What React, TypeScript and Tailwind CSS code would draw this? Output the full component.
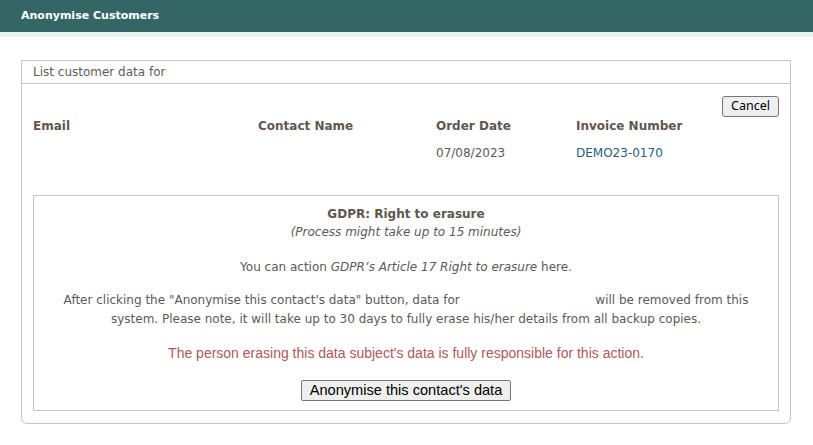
import React from 'react';

const columns = [
  { label: 'Email', value: '' },
  { label: 'Contact Name', value: '' },
  { label: 'Order Date', value: '07/08/2023' },
  { label: 'Invoice Number', value: 'DEMO23-0170', link: true },
];

const App: React.FC = () => {
  return (
    <div className="min-h-[445px] w-full bg-white font-['DejaVu_Sans','Verdana',sans-serif] text-[12px] text-[#5a5a5a]">
      {/* Page Header */}
      <header className="h-8 bg-[#346666] flex items-center px-[21px]">
        <h1 className="text-[11px] font-bold text-white">Anonymise Customers</h1>
      </header>
      <div className="h-[5px] bg-[#e8f1f1]" />

      <div className="px-[21px] pt-[23px]">
        <div className="w-[770px] border border-[#c6c6c6] rounded-b-[6px]">
          <div className="h-[23px] border-b border-[#c6c6c6] px-[11px] flex items-center text-[#5c5c5c]">
            List customer data for
          </div>

          <div className="px-[11px] pt-[12px] pb-[12px]">
            <div className="flex justify-end">
              <button className="h-[21px] px-[8px] bg-[#efefef] border border-[#767676] rounded-[3px] font-['Noto_Sans',sans-serif] text-[12.5px] leading-none text-black">
                Cancel
              </button>
            </div>

            <div className="grid grid-cols-[225px_178px_140px_1fr]">
              {columns.map((c) => (
                <div key={c.label} className="leading-[18px] font-bold text-[#5f5650]">
                  {c.label}
                </div>
              ))}
              {columns.map((c) => (
                <div
                  key={c.label + '-v'}
                  className={`mt-[9px] leading-[18px] ${c.link ? 'text-[#24607a]' : 'text-[#5a5a5a]'}`}
                >
                  {c.value}
                </div>
              ))}
            </div>

            {/* GDPR Box */}
            <div className="mt-[33px] border border-[#c6c6c6] pt-[9px] pb-[9px] text-center">
              <p className="leading-[18px] font-bold text-[#5f5650]">GDPR: Right to erasure</p>
              <p className="leading-[18px] italic">(Process might take up to 15 minutes)</p>

              <p className="mt-[17px] leading-[18px]">
                You can action <span className="italic">GDPR’s Article 17 Right to erasure</span> here.
              </p>

              <p className="mt-[15px] leading-[19px] px-[24px]">
                After clicking the "Anonymise this contact's data" button, data for{' '}
                <span className="inline-block w-[128px] h-[12px]" /> will be removed from this system. Please note,
                it will take up to 30 days to fully erase his/her details from all backup copies.
              </p>

              <p className="mt-[15px] leading-[18px] font-['Liberation_Sans','Arial',sans-serif] text-[14px] text-[#b0585a]">
                The person erasing this data subject's data is fully responsible for this action.
              </p>

              <button className="mt-[18px] h-[21px] px-[8px] bg-[#efefef] border border-[#767676] rounded-[2px] font-['Liberation_Sans','Arial',sans-serif] text-[14.6px] leading-none text-black">
                Anonymise this contact's data
              </button>
            </div>
          </div>
        </div>
      </div>
    </div>
  );
};

export default App;
